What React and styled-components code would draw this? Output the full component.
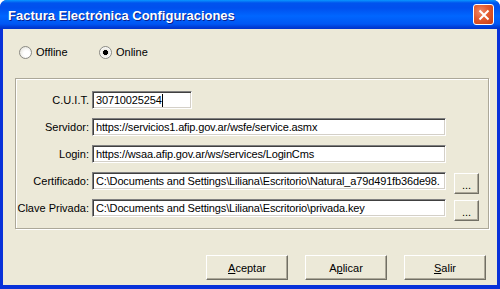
import styled, { createGlobalStyle } from "styled-components";

const Global = createGlobalStyle`
  html, body { margin: 0; padding: 0; background: #fff; }
  body { font-family: "Liberation Sans", Tahoma, sans-serif; font-size: 11px; color: #000; }
`;

const fields = [
  { label: "Servidor:", value: "https://servicios1.afip.gov.ar/wsfe/service.asmx" },
  { label: "Login:", value: "https://wsaa.afip.gov.ar/ws/services/LoginCms" },
  { label: "Certificado:", value: "C:\\Documents and Settings\\Liliana\\Escritorio\\Natural_a79d491fb36de98.", browse: true },
  { label: "Clave Privada:", value: "C:\\Documents and Settings\\Liliana\\Escritorio\\privada.key", browse: true },
];

export default function App() {
  return (
    <>
      <Global />
      <Window>
        <TitleBar>
          <Title>Factura Electrónica Configuraciones</Title>
          <CloseBtn>
            <svg width="12" height="12" viewBox="0 0 12 12">
              <path d="M1.5 1.5 L10.5 10.5 M10.5 1.5 L1.5 10.5" stroke="#fff" strokeWidth="2" />
            </svg>
          </CloseBtn>
        </TitleBar>
        <Body>
          <RadioRow>
            <RadioLabel>
              <Radio />
              Offline
            </RadioLabel>
            <RadioLabel>
              <Radio checked />
              Online
            </RadioLabel>
          </RadioRow>
          <Group>
            <Label>C.U.I.T.</Label>
            <Input $w="100px">
              30710025254<Caret />
            </Input>
            <span />
            {fields.map((f) => (
              <Row key={f.label} f={f} />
            ))}
          </Group>
          <Footer>
            <Button><u>A</u>ceptar</Button>
            <Button>A<u>p</u>licar</Button>
            <Button><u>S</u>alir</Button>
          </Footer>
        </Body>
      </Window>
    </>
  );
}

function Row({ f }) {
  return (
    <>
      <Label>{f.label}</Label>
      <Input>{f.value}</Input>
      {f.browse ? <SmallButton>...</SmallButton> : <span />}
    </>
  );
}

const Window = styled.div`
  width: 500px;
  height: 289px;
  display: flex;
  flex-direction: column;
  background: #0831d9;
  border-radius: 7px 7px 0 0;
  overflow: hidden;
`;

const TitleBar = styled.div`
  height: 29px;
  flex: none;
  display: flex;
  align-items: center;
  padding: 0 5px 0 8px;
  background: linear-gradient(
    to bottom,
    #0997ff 0px,
    #0053ee 3px,
    #0050ee 8px,
    #0066ff 16px,
    #0057f4 24px,
    #003dd7 27px,
    #0033cc 29px
  );
`;

const Title = styled.div`
  flex: 1;
  color: #fff;
  font-family: "Liberation Sans", Tahoma, sans-serif;
  font-weight: bold;
  font-size: 13px;
  text-shadow: 1px 1px 0 #0a1e8c;
  padding-top: 1px;
`;

const CloseBtn = styled.div`
  width: 19px;
  height: 19px;
  margin-right: 1px;
  border: 1px solid #fff;
  border-radius: 3px;
  background: radial-gradient(circle at 35% 35%, #f08a6a 0%, #e35a2e 45%, #c83c14 100%);
  display: flex;
  align-items: center;
  justify-content: center;
`;

const Body = styled.div`
  flex: 1;
  margin: 0 3px 4px 3px;
  background: #ece9d8;
  display: flex;
  flex-direction: column;
`;

const RadioRow = styled.div`
  display: flex;
  margin: 15px 0 0 16px;
  height: 16px;
  align-items: center;
`;

const RadioLabel = styled.label`
  display: flex;
  align-items: center;
  gap: 4px;
  width: 80px;
`;

const Radio = styled.span`
  width: 11px;
  height: 11px;
  border-radius: 50%;
  border: 1px solid #8a8a84;
  background: ${(p) =>
    p.checked
      ? "radial-gradient(circle, #000 0 2.3px, #e8e6de 2.8px, #fff 6px)"
      : "radial-gradient(circle at 60% 60%, #fff 30%, #dcdad0 100%)"};
  box-sizing: content-box;
`;

const Group = styled.div`
  margin: 18px 0 0 12px;
  width: 474px;
  height: 151px;
  box-sizing: border-box;
  border: 1px solid #aca899;
  box-shadow: inset 1px 1px 0 #fff, 1px 1px 0 #fff;
  display: grid;
  grid-template-columns: 72px 354px 25px;
  grid-auto-rows: 18px;
  column-gap: 3px;
  row-gap: 9px;
  padding: 12px 0 0 1px;
  align-items: center;
`;

const Label = styled.div`
  text-align: right;
  white-space: nowrap;
  line-height: 18px;
`;

const Input = styled.div`
  width: ${(p) => p.$w || "354px"};
  height: 18px;
  box-sizing: border-box;
  background: #fff;
  border-top: 1px solid #808080;
  border-left: 1px solid #808080;
  border-bottom: 1px solid #fff;
  border-right: 1px solid #fff;
  box-shadow: inset 1px 1px 0 #404040, inset -1px -1px 0 #d4d0c8;
  padding: 0 2px 0 3px;
  line-height: 16px;
  letter-spacing: -0.15px;
  white-space: nowrap;
  overflow: hidden;
  display: flex;
  align-items: center;
`;

const Caret = styled.span`
  display: inline-block;
  width: 1px;
  height: 13px;
  background: #000;
`;

const buttonBase = `
  box-sizing: border-box;
  background: #ece9d8;
  border-top: 1px solid #fff;
  border-left: 1px solid #fff;
  border-right: 1px solid #716f64;
  border-bottom: 1px solid #716f64;
  box-shadow: inset -1px -1px 0 #aca899;
  display: flex;
  align-items: center;
  justify-content: center;
  font-family: "Liberation Sans", Tahoma, sans-serif;
  font-size: 11px;
  color: #000;
`;

const SmallButton = styled.div`
  ${buttonBase}
  width: 25px;
  height: 21px;
  margin-left: 5px;
  align-self: start;
  margin-top: 1px;
  padding-top: 3px;
`;

const Footer = styled.div`
  display: flex;
  justify-content: flex-end;
  gap: 17px;
  margin: auto 11px 5px 0;
`;

const Button = styled.div`
  ${buttonBase}
  width: 82px;
  height: 25px;
  u { text-decoration: underline; }
`;
